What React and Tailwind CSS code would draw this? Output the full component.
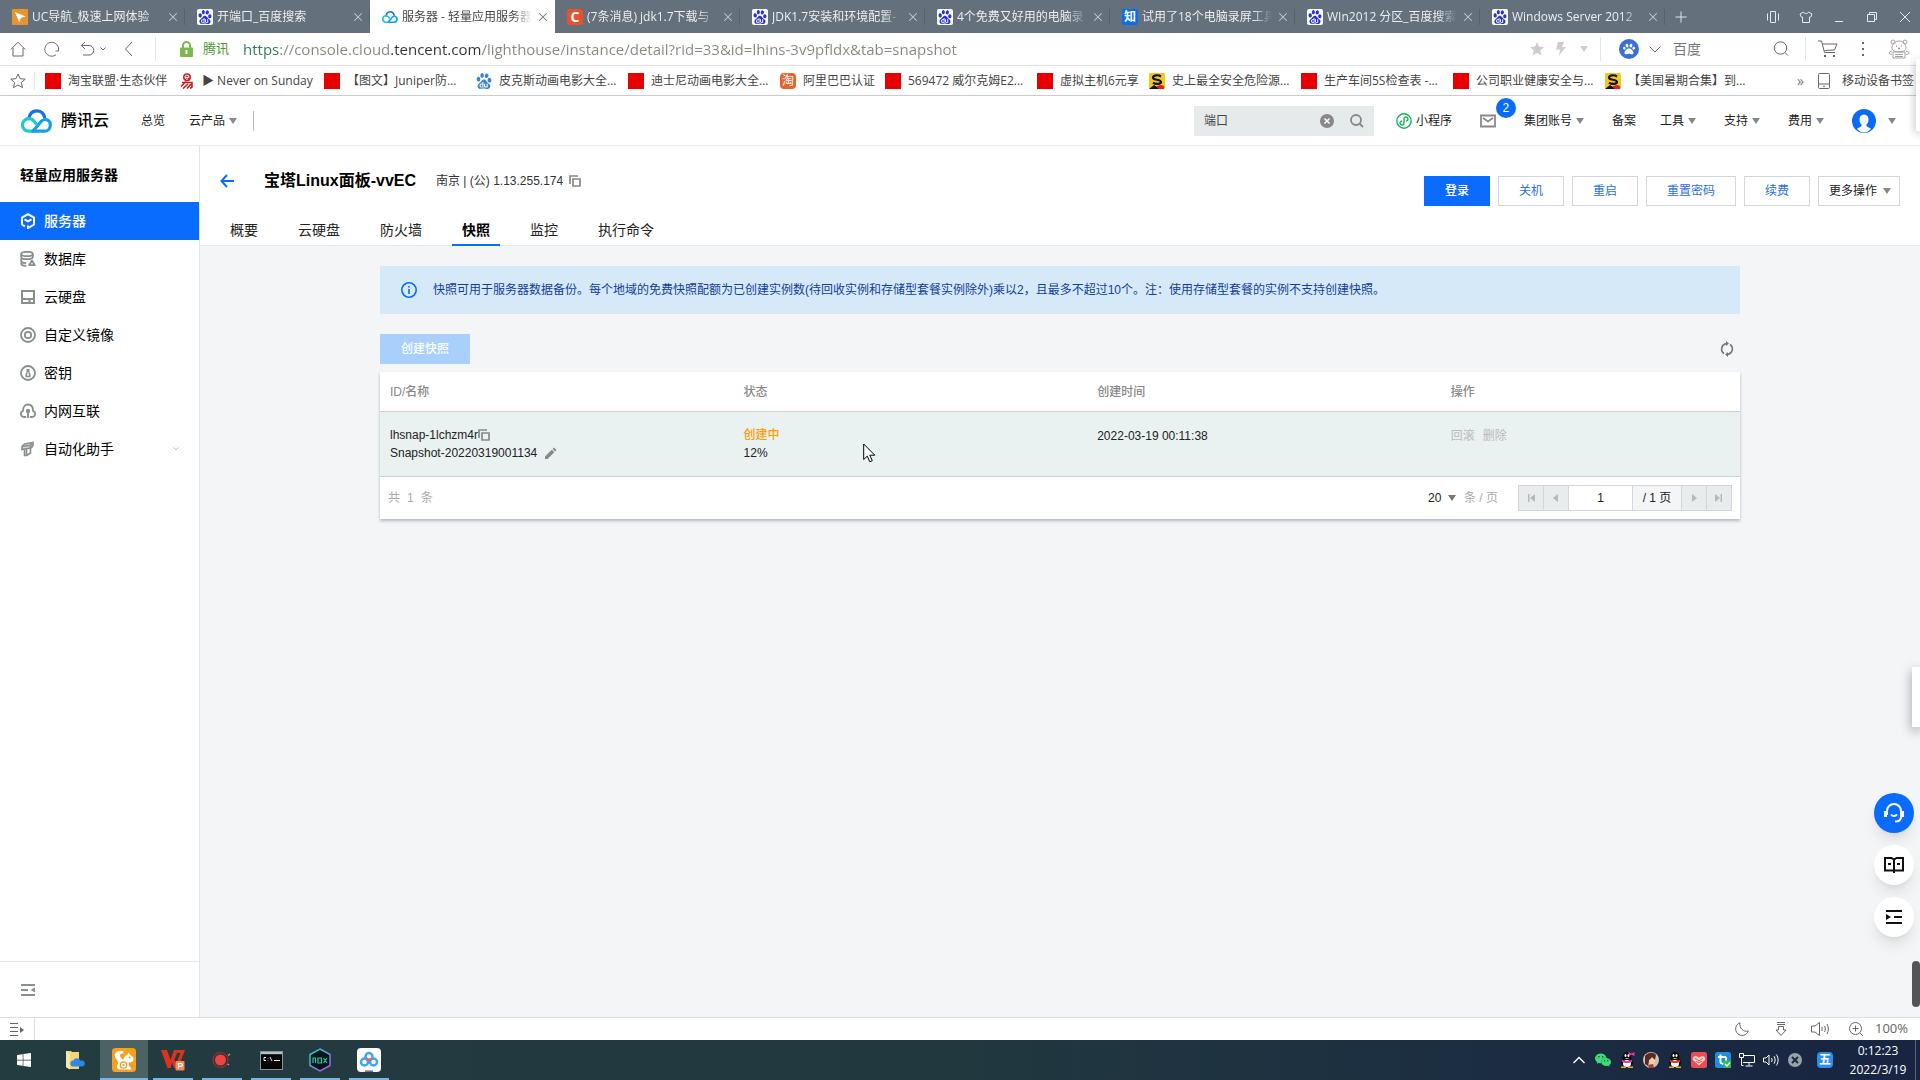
import React, { useState } from 'react';
import { SiBaidu, SiWechat } from 'react-icons/si';
import { FaPaw, FaWindows } from 'react-icons/fa';
import { X, Plus } from 'lucide-react';

const tabs = [
  { title: 'UC导航_极速上网体验', icon: 'uc' },
  { title: '开端口_百度搜索', icon: 'baidu' },
  { title: '服务器 - 轻量应用服务器', icon: 'tencent', active: true },
  { title: '(7条消息) jdk1.7下载与', icon: 'csdn' },
  { title: 'JDK1.7安装和环境配置-', icon: 'baidu' },
  { title: '4个免费又好用的电脑录', icon: 'baidu' },
  { title: '试用了18个电脑录屏工具', icon: 'zhihu' },
  { title: 'WIn2012 分区_百度搜索', icon: 'baidu' },
  { title: 'Windows Server 2012', icon: 'baidu' },
];

const bookmarks = [
  { title: '淘宝联盟·生态伙伴', icon: 'red', width: 'w-[134px]' },
  { title: '▶ Never on Sunday', icon: 'yi', width: 'w-[145px]' },
  { title: '【图文】Juniper防...', icon: 'red', width: 'w-[152px]' },
  { title: '皮克斯动画电影大全...', icon: 'paw', width: 'w-[152px]' },
  { title: '迪士尼动画电影大全...', icon: 'red', width: 'w-[152px]' },
  { title: '阿里巴巴认证', icon: 'tao', width: 'w-[105px]' },
  { title: '569472 威尔克姆E2...', icon: 'red', width: 'w-[152px]' },
  { title: '虚拟主机6元享', icon: 'red', width: 'w-[112px]' },
  { title: '史上最全安全危险源...', icon: 'sou', width: 'w-[152px]' },
  { title: '生产车间5S检查表 -...', icon: 'red', width: 'w-[152px]' },
  { title: '公司职业健康安全与...', icon: 'red', width: 'w-[152px]' },
  { title: '【美国暑期合集】到...', icon: 'sou', width: 'w-[152px]' },
];

const menu = [
  { name: '服务器', icon: 'server', active: true },
  { name: '数据库', icon: 'database' },
  { name: '云硬盘', icon: 'disk' },
  { name: '自定义镜像', icon: 'image' },
  { name: '密钥', icon: 'key' },
  { name: '内网互联', icon: 'network' },
  { name: '自动化助手', icon: 'assistant', children: true },
];

const detailTabs = ['概要', '云硬盘', '防火墙', '快照', '监控', '执行命令'];

const Caret = ({ className = 'text-[#888]' }) => (
  <svg width="8" height="6" viewBox="0 0 8 6" className={`shrink-0 ${className}`} fill="currentColor">
    <path d="M0 0h8L4 6z" />
  </svg>
);

const TencentLogo = ({ className }) => (
  <svg viewBox="0 0 34 26" className={className} fill="none" strokeWidth="3.4" strokeLinecap="round">
    <path d="M8.5 10.5C9.5 5 13 2 17.3 2c4.600 0 7.500 3 8.500 7" stroke="#1a6fe8" />
    <path d="M16 15.500C14 12 11.500 10.500 8.500 10.500A6.700 6.700 0 0 0 8.500 24H14" stroke="#1fc8d8" />
    <path d="M13 24 22 13.500C25.500 9.500 32 11.500 32 17.200 32 21 29.500 24 25.500 24H13" stroke="#12a0ea" strokeLinejoin="round" />
  </svg>
);

const Favicon = ({ type }) => {
  switch (type) {
    case 'uc':
      return (
        <svg viewBox="0 0 16 16" className="w-4 h-4 shrink-0">
          <rect width="16" height="16" rx="1" fill="#e8942e" />
          <path d="M3 3l10.500 4.500L8.800 9 7.200 13.500z" fill="#fff" />
        </svg>
      );
    case 'baidu':
      return (
        <span className="w-4 h-4 shrink-0 rounded-xs bg-white flex items-center justify-center">
          <SiBaidu className="w-3.5 h-3.5 text-[#2932d0]" />
        </span>
      );
    case 'tencent':
      return <TencentLogo className="w-4 h-4 shrink-0" />;
    case 'csdn':
      return <span className="w-4 h-4 shrink-0 rounded-xs bg-[#e8502f] text-white text-sm leading-4 font-bold text-center">C</span>;
    case 'zhihu':
      return <span className="w-4 h-4 shrink-0 rounded-xs bg-[#0a6cf0] text-white text-xs leading-4 font-bold text-center">知</span>;
    case 'paw':
      return <SiBaidu className="w-4 h-4 shrink-0 text-[#3a82dc]" />;
    case 'tao':
      return <span className="w-4 h-4 shrink-0 rounded-sm bg-[#e8632c] text-white text-xs leading-4 text-center">淘</span>;
    case 'yi':
      return (
        <svg viewBox="0 0 16 16" className="w-4 h-4 shrink-0" fill="none" stroke="#c81e1e" strokeWidth="1.600">
          <circle cx="8" cy="4.200" r="4" fill="#c81e1e" stroke="none" />
          <path d="M6 4.400h4a2 2 0 1 0-.8 1.400" stroke="#fff" strokeWidth="1" />
          <path d="M3 9.500h10v4.500l-2 1.500M7 8.500l-5 5M9 11l-5 4.500M12 11l-4 4.500" />
        </svg>
      );
    case 'sou':
      return (
        <svg viewBox="0 0 16 16" className="w-4 h-4 shrink-0">
          <rect width="16" height="16" rx="1" fill="#f2c81e" />
          <path d="M12 3.500C9 1.500 4 2 4 4.800 4 7.500 12 6 12 9c0 2.300-5 2.500-8 .8" fill="none" stroke="#111" strokeWidth="2.200" />
          <path d="M0 16l5-4 6 4z" fill="#111" />
          <path d="M8 13l4-1 3 1v3H9z" fill="#e02020" />
        </svg>
      );
    default:
      return <span className="w-4 h-4 shrink-0 bg-[#e60000]" />;
  }
};

const MenuIcon = ({ type }) => {
  const common = { viewBox: '0 0 16 16', className: 'w-4 h-4 shrink-0', fill: 'none', stroke: 'currentColor', strokeWidth: 1.8 };
  switch (type) {
    case 'server':
      return (
        <svg {...common} strokeWidth="2">
          <path d="M5 13.300 2 11.500v-7L8 1.200l6 3.300v7L8 15v-2.500" />
          <path d="M4.500 6.300 8 8.300l3.500-2" />
        </svg>
      );
    case 'database':
      return (
        <svg {...common}>
          <ellipse cx="7" cy="3" rx="5.800" ry="2.200" />
          <path d="M1.200 3v3c0 1.300 2.600 2.200 5.800 2.200S12.800 7.300 12.800 6V3M1.200 7.500V10c0 1 1.800 2 5 2M1.200 11.500v1.300c0 1 2 2 5 2" />
          <path d="M12 9.500l2.800 4.700H9.200z" strokeLinejoin="round" />
        </svg>
      );
    case 'disk':
      return (
        <svg {...common} strokeWidth="2">
          <path d="M2 2h12v12H2zM2 10h12M9.500 10v4" />
        </svg>
      );
    case 'image':
      return (
        <svg {...common}>
          <circle cx="8" cy="8" r="7" />
          <circle cx="8" cy="8" r="3.200" />
        </svg>
      );
    case 'key':
      return (
        <svg {...common}>
          <circle cx="8" cy="8" r="7" />
          <path d="M8 4v3.500" strokeWidth="3" />
          <path d="M5.500 11.500h5M6.800 7.500l-.8 4M9.200 7.500l.8 4" strokeWidth="1.600" />
        </svg>
      );
    case 'network':
      return (
        <svg {...common}>
          <path d="M6 14H4.200A3.200 3.200 0 0 1 3 7.800C3 4 5 1.500 8 1.500S13 4 13 7.800A3.200 3.200 0 0 1 11.800 14H10" />
          <circle cx="8" cy="8" r="1.300" />
          <path d="M8 8v7" strokeWidth="2" />
        </svg>
      );
    default:
      return (
        <svg {...common} strokeWidth="1.600">
          <path d="M2 5.500 4.500 3 13 1.500v3L10.500 7 2 8.500z" fill="currentColor" fillOpacity=".35" />
          <path d="M4.500 8.500v6h2V8.200M6.500 14.500l4-2.500V7l2-1.500M2 5.500l8.500-1.300L13 1.500M10.500 4.200V7" />
        </svg>
      );
  }
};

const CopyIcon = () => (
  <svg viewBox="0 0 12 12" className="w-3 h-3 shrink-0 text-[#888]" fill="none" stroke="currentColor" strokeWidth="1.700">
    <path d="M4 4h7v7H4zM1 9V1h8" />
  </svg>
);

const BrowserTabs = () => (
  <div className="h-[33px] flex bg-[#64707c] text-[#eceff2] text-xs">
    {tabs.map((tab, i) => (
      <div
        key={i}
        className={`w-[185px] shrink-0 flex items-center pl-3 pr-2 gap-1 ${tab.active ? 'bg-white text-[#444]' : ''}`}
      >
        <Favicon type={tab.icon} />
        <span className="flex-1 min-w-0 overflow-hidden whitespace-nowrap [mask-image:linear-gradient(to_right,black_85%,transparent)]">
          {tab.title}
        </span>
        <button aria-label="关闭标签" className={`shrink-0 ${tab.active ? 'text-[#777]' : 'text-[#c3c9cf]'}`}>
          <X className="w-3.5 h-3.5" strokeWidth={1.8} />
        </button>
        <span className={`w-px h-4 -mr-2 ${tab.active ? '' : 'bg-[#56616c]'}`} />
      </div>
    ))}
    <button aria-label="新标签" className="w-8 flex items-center justify-center">
      <Plus className="w-4.5 h-4.5" strokeWidth={1.2} />
    </button>
    <div className="flex-1 flex items-center justify-end gap-[19px] pr-2 text-[#e8ebee]">
      <button aria-label="分屏">
        <svg viewBox="0 0 14 14" className="w-3.5 h-3.5" fill="none" stroke="currentColor">
          <path d="M4.500 1.500h5v11h-5zM1.500 3.500v7M12.500 3.500v7" />
        </svg>
      </button>
      <button aria-label="皮肤">
        <svg viewBox="0 0 14 14" className="w-3.5 h-3.5" fill="none" stroke="currentColor">
          <path d="M4.500 2 1 4l1.200 3H3.500v5.500h7V7h1.300L13 4 9.500 2C9 4 5 4 4.500 2z" />
        </svg>
      </button>
      <button aria-label="最小化">
        <svg viewBox="0 0 14 14" className="w-3.5 h-3.5" stroke="currentColor">
          <path d="M3 11.500h8" />
        </svg>
      </button>
      <button aria-label="还原">
        <svg viewBox="0 0 14 14" className="w-3.5 h-3.5" fill="none" stroke="currentColor">
          <path d="M2.500 4.500h7v7h-7zM4.500 4.500v-2h7v7h-2" />
        </svg>
      </button>
      <button aria-label="关闭窗口">
        <svg viewBox="0 0 14 14" className="w-3.5 h-3.5" stroke="currentColor">
          <path d="M2 2l10 10M12 2 2 12" />
        </svg>
      </button>
    </div>
  </div>
);

const AddressBar = () => (
  <div className="h-[33px] flex items-center bg-white border-b border-[#e2e4e4] text-[#666]">
    <div className="flex items-center pl-2.5">
      <button aria-label="主页">
        <svg viewBox="0 0 16 16" className="w-4 h-4" fill="none" stroke="currentColor">
          <path d="M.8 8.500 8 1.200l7.200 7.300M3 7v8h10V7" />
        </svg>
      </button>
      <button aria-label="刷新" className="ml-4.5">
        <svg viewBox="0 0 16 16" className="w-4 h-4" fill="none" stroke="currentColor">
          <path d="M12 13.800A7 7 0 1 1 14.500 10M14.500 6v4h-3" strokeOpacity=".9" />
        </svg>
      </button>
      <button aria-label="撤销" className="ml-5 flex items-center gap-1">
        <svg viewBox="0 0 16 16" className="w-4 h-4" fill="none" stroke="currentColor">
          <path d="M5 1 1.500 4.500 5 8M1.500 4.500H9a4.700 4.700 0 0 1 0 9.500H3" />
        </svg>
        <svg viewBox="0 0 6 4" className="w-1.5 h-1" fill="none" stroke="currentColor">
          <path d="M.5.5 3 3 5.500.5" />
        </svg>
      </button>
      <button aria-label="后退" className="ml-4.5">
        <svg viewBox="0 0 9 16" className="w-[9px] h-4" fill="none" stroke="currentColor">
          <path d="M8 1 1.500 8 8 15" />
        </svg>
      </button>
    </div>
    <div className="w-px h-6 bg-[#e3e5e5] ml-5.5" />
    <svg viewBox="0 0 13 16" className="w-[13px] h-4 ml-6" fill="none">
      <path d="M3 7V4.500a3.500 3.500 0 0 1 7 0V7" stroke="#7cb84e" strokeWidth="2" />
      <rect y="6.500" width="13" height="9.500" rx="1" fill="#7cb84e" />
      <path d="M6.500 9v4" stroke="#fff" strokeWidth="2" />
    </svg>
    <span className="ml-2.5 text-[13px] text-[#4c9a30]">腾讯</span>
    <input
      aria-label="地址"
      defaultValue="https://console.cloud.tencent.com/lighthouse/instance/detail?rid=33&id=lhins-3v9pfldx&tab=snapshot"
      className="flex-1 min-w-0 ml-3.5 text-[15px] outline-none text-transparent bg-clip-text bg-[linear-gradient(to_right,#2f7d4a_0_37px,#85897f_37px_146px,#333_146px_239px,#85897f_239px)]"
    />
    <div className="flex items-center text-[#ccc]">
      <svg viewBox="0 0 16 16" className="w-3.5 h-3.5" fill="currentColor">
        <path d="M8 0l2.300 5.300 5.700.5-4.300 3.800L13 15.500 8 12.400 3 15.500l1.300-5.900L0 5.800l5.700-.5z" />
      </svg>
      <svg viewBox="0 0 10 14" className="w-2.5 h-3.5 ml-3" fill="currentColor">
        <path d="M2 0h6L6 5h4L2.500 14 4.500 7.500H0z" />
      </svg>
      <Caret className="ml-3.5 text-[#ccc]" />
    </div>
    <div className="w-px h-6 bg-[#e3e5e5] ml-3" />
    <div className="flex items-center w-51 pl-4.5">
      <span className="w-5 h-5 shrink-0 rounded-full bg-[#3a6fd8] flex items-center justify-center">
        <FaPaw className="w-3 h-3 text-white" />
      </span>
      <svg viewBox="0 0 12 7" className="w-3 h-[7px] ml-2.5 shrink-0" fill="none" stroke="currentColor">
        <path d="M.5.5 6 6 11.500.5" />
      </svg>
      <input aria-label="搜索引擎" placeholder="百度" className="flex-1 min-w-0 ml-3 text-sm outline-none placeholder:text-[#777]" />
      <button aria-label="搜索">
        <svg viewBox="0 0 16 16" className="w-4 h-4 mr-4" fill="none" stroke="currentColor">
          <circle cx="7.500" cy="7" r="6.200" />
          <path d="M12 11.500l3 3" />
        </svg>
      </button>
    </div>
    <div className="w-px h-6 bg-[#e3e5e5]" />
    <button aria-label="购物" className="ml-3">
      <svg viewBox="0 0 20 18" className="w-5 h-4.5" fill="none" stroke="currentColor">
        <path d="M0 1h3.500l3 11.500H17M4.500 4H19l-2.500 6-10 .5" />
        <path d="M6 16h2M15 16h2" strokeWidth="2" />
      </svg>
    </button>
    <button aria-label="菜单" className="ml-6">
      <svg viewBox="0 0 2 14" className="w-0.5 h-3.5" fill="currentColor">
        <path d="M0 0h2v2H0zM0 6h2v2H0zM0 12h2v2H0z" />
      </svg>
    </button>
    <button aria-label="账号" className="ml-6 mr-2.5">
      <svg viewBox="0 0 22 20" className="w-5.5 h-5" fill="none" stroke="#999" strokeWidth=".9">
        <circle cx="5" cy="3" r="2" />
        <circle cx="17" cy="3" r="2" />
        <path d="M4 9c0-4 3-7 7-7s7 3 7 7c0 2.500-3 4-7 4s-7-1.500-7-4zM4 12c-1 0-3 1-3 2s2 2 3 1M18 12c1 0 3 1 3 2s-2 2-3 1M5 13h12v6H5zM7 15.500h8M7 17.500h8" />
        <path d="M8 7h.8M13.200 7h.8M10 9.500h2" strokeWidth="1.500" />
      </svg>
    </button>
  </div>
);

const BookmarkBar = () => (
  <div className="h-[30px] flex items-center bg-white border-b border-[#c9cccc] text-[#444] text-xs">
    <button aria-label="收藏" className="pl-2.5">
      <svg viewBox="0 0 16 16" className="w-4 h-4" fill="none" stroke="#666">
        <path d="M8 1l2.100 4.700 5.100.5-3.900 3.400 1.200 5L8 12l-4.500 2.600 1.200-5L.8 6.200l5.100-.5z" />
      </svg>
    </button>
    <div className="w-px h-4.5 ml-2 mr-2.5 bg-[#e3e5e5]" />
    {bookmarks.map((item) => (
      <a key={item.title} href="#" className={`${item.width} shrink-0 flex items-center gap-[7px] whitespace-nowrap`}>
        <Favicon type={item.icon} />
        {item.title}
      </a>
    ))}
    <div className="flex-1 flex items-center justify-end pr-1.5">
      <span className="text-[#777] text-sm">»</span>
      <svg viewBox="0 0 12 16" className="w-3 h-4 ml-3.5" fill="none" stroke="#666">
        <rect x=".5" y=".5" width="11" height="15" rx="1" />
        <path d="M.5 11h11M5 13.300h2" />
      </svg>
      <a href="#" className="ml-3">移动设备书签</a>
    </div>
  </div>
);

const ConsoleHeader = () => (
  <header className="h-[50px] flex items-center bg-white border-b border-[#e8eaea] text-xs text-[#222]">
    <TencentLogo className="w-[33px] h-6 ml-5" />
    <span className="ml-2 text-base font-medium text-black">腾讯云</span>
    <a href="#" className="ml-8">总览</a>
    <button className="ml-6 flex items-center gap-1">云产品<Caret /></button>
    <div className="w-px h-5 ml-4 bg-[#bbb]" />
    <div className="flex-1" />
    <label className="w-45 h-[30px] flex items-center bg-[#e7eaea] px-2.5">
      <input aria-label="搜索产品" defaultValue="端口" className="flex-1 min-w-0 outline-none text-[#444]" />
      <svg viewBox="0 0 14 14" className="w-3.5 h-3.5" stroke="#fff" strokeWidth="1.600">
        <circle cx="7" cy="7" r="7" fill="#888" stroke="none" />
        <path d="M4.500 4.500l5 5M9.500 4.500l-5 5" />
      </svg>
      <svg viewBox="0 0 14 14" className="w-3.5 h-3.5 ml-4" fill="none" stroke="#888" strokeWidth="1.800">
        <circle cx="6" cy="6" r="5" />
        <path d="M9.500 9.500 13 13" />
      </svg>
    </label>
    <div className="flex items-center gap-7 pl-5.5 pr-6">
      <a href="#" className="flex items-center gap-1">
        <svg viewBox="0 0 16 16" className="w-4 h-4" fill="none" stroke="#18b45a" strokeWidth="1.400">
          <circle cx="8" cy="8" r="7.200" />
          <path d="M9.800 8a2 2 0 1 0-1.800-2v4a2 2 0 1 1-1.800-2" />
        </svg>
        小程序
      </a>
      <button aria-label="消息" className="relative">
        <svg viewBox="0 0 16 14" className="w-4 h-3.5" fill="none" stroke="#888" strokeWidth="1.800">
          <path d="M1 1.500h14v11H1zM3 4l5 3.500L13 4" />
        </svg>
        <span className="absolute -top-4 left-4 w-5 h-5 rounded-full bg-[#0a6cf5] text-white text-xs leading-5 text-center">2</span>
      </button>
      <button className="flex items-center gap-1">集团账号<Caret /></button>
      <div className="flex items-center gap-6">
        <a href="#">备案</a>
        <button className="flex items-center gap-1">工具<Caret /></button>
      </div>
      <button className="flex items-center gap-1">支持<Caret /></button>
      <button className="flex items-center gap-1">费用<Caret /></button>
      <button aria-label="用户" className="flex items-center gap-3">
        <svg viewBox="0 0 24 24" className="w-6 h-6">
          <circle cx="12" cy="12" r="12" fill="#0a6cf5" />
          <path d="M12 5.500c-3 0-4.500 2.200-4.500 5 0 2.200.8 4 2.200 5.200 0 2.300-3 2.800-4.700 3.800 3.500 5.300 10.500 5.300 14 0-1.700-1-4.700-1.500-4.700-3.800 1.400-1.200 2.200-3 2.200-5.200 0-2.800-1.500-5-4.500-5z" fill="#fff" />
        </svg>
        <Caret />
      </button>
    </div>
  </header>
);

const Sidebar = () => (
  <aside className="w-50 shrink-0 flex flex-col bg-white border-r border-[#e2e5e8]">
    <h2 className="h-14 flex items-center pl-5 pt-0.5 text-sm font-bold text-black">轻量应用服务器</h2>
    <nav className="flex-1">
      {menu.map((item) => (
        <a
          key={item.name}
          href="#"
          className={`h-[38px] flex items-center gap-2 px-5 text-sm ${
            item.active ? 'bg-[#0a6cff] text-white font-medium' : 'text-black'
          }`}
        >
          <span className={item.active ? 'text-white' : 'text-[#888f8f]'}>
            <MenuIcon type={item.icon} />
          </span>
          <span className="flex-1">{item.name}</span>
          {item.children && (
            <svg viewBox="0 0 6 4" className="w-1.5 h-1" fill="none" stroke="#bbb">
              <path d="M.5.5 3 3 5.500.5" />
            </svg>
          )}
        </a>
      ))}
    </nav>
    <div className="h-14 flex items-center pl-5 border-t border-[#e5e8e8]">
      <button aria-label="收起菜单">
        <svg viewBox="0 0 16 14" className="w-4 h-3.5 text-[#888f8f]" fill="none" stroke="currentColor" strokeWidth="2">
          <path d="M1 2h14M1 7h7M1 12h14" />
          <path d="M15 4.500v5L10.500 7z" fill="currentColor" stroke="none" />
        </svg>
      </button>
    </div>
  </aside>
);

const ActionButton = ({ children }) => (
  <button className="h-[30px] px-5 border border-[#d3d6da] bg-white text-[#2e6fdc]">{children}</button>
);

const InstanceHeader = () => {
  const [active, setActive] = useState('快照');

  return (
    <div className="flex justify-between items-start bg-white border-b border-[#e5e8ea] pl-5 pr-5 text-xs">
      <div>
        <div className="h-[70px] flex items-center">
          <button aria-label="返回">
            <svg viewBox="0 0 14 14" className="w-3.5 h-3.5" fill="none" stroke="#0a6cff" strokeWidth="2">
              <path d="M7 1 1.500 7 7 13M1.500 7H14" />
            </svg>
          </button>
          <h1 className="ml-7.5 text-base font-bold text-black">宝塔Linux面板-vvEC</h1>
          <span className="ml-5 mr-1.5 text-[#333]">南京 | (公) 1.13.255.174</span>
          <CopyIcon />
        </div>
        <div className="h-[30px] flex gap-5 text-sm -mb-px">
          {detailTabs.map((tab) => (
            <button
              key={tab}
              onClick={() => setActive(tab)}
              className={`px-2.5 border-b-2 ${tab === active ? 'border-[#0a6cff] font-bold text-black' : 'border-transparent text-[#222]'}`}
            >
              {tab}
            </button>
          ))}
        </div>
      </div>
      <div className="flex gap-2 mt-[30px]">
        <button className="h-[30px] px-[21px] bg-[#0a6cff] text-white font-medium">登录</button>
        <ActionButton>关机</ActionButton>
        <ActionButton>重启</ActionButton>
        <ActionButton>重置密码</ActionButton>
        <ActionButton>续费</ActionButton>
        <button className="h-[30px] px-2 flex items-center gap-1.5 border border-[#d3d6da] bg-white text-[#222]">
          <span className="pl-0.5">更多操作</span>
          <Caret />
        </button>
      </div>
    </div>
  );
};

const pagerButton = 'w-[25px] flex items-center justify-center bg-[#e9ecec] border-r border-[#d3d6da]';

const SnapshotTable = () => (
  <div className="mt-2 bg-white shadow-[0_2px_3px_rgba(54,58,80,0.320)] text-[#222]">
    <table className="w-full table-fixed text-left">
      <thead>
        <tr className="h-[39px] border-b border-[#cdd2d2] text-[#888]">
          <th className="w-[26%] px-2.5 pt-0.5 font-medium">ID/名称</th>
          <th className="w-[26%] px-2.5 pt-0.5 font-medium">状态</th>
          <th className="w-[26%] px-2.5 pt-0.5 font-medium">创建时间</th>
          <th className="w-[22%] px-2.5 pt-0.5 font-medium">操作</th>
        </tr>
      </thead>
      <tbody>
        <tr className="h-[65px] bg-[#e9f1f1] border-b border-[#cdd2d2] align-top leading-[18px]">
          <td className="px-2.5 pt-3.5">
            <div className="flex items-center">lhsnap-1lchzm4r<CopyIcon /></div>
            <div className="flex items-center gap-2">
              Snapshot-20220319001134
              <button aria-label="修改名称">
                <svg viewBox="0 0 12 12" className="w-3 h-3" fill="#888">
                  <path d="M0 9.500V12h2.500l6.800-6.800-2.500-2.500zM11.500 3 9 .5 7.600 1.900l2.500 2.500z" />
                </svg>
              </button>
            </div>
          </td>
          <td className="px-2.5 pt-3.5">
            <div className="text-[#ff9d00] font-medium">创建中</div>
            <div>12%</div>
          </td>
          <td className="px-2.5 pt-[15px]">2022-03-19 00:11:38</td>
          <td className="px-2.5 pt-[15px]">
            <div className="flex gap-2 text-[#bbb]">
              <button disabled>回滚</button>
              <button disabled>删除</button>
            </div>
          </td>
        </tr>
      </tbody>
    </table>
    <div className="h-[42px] flex items-center px-2 text-[#aaa]">
      <span className="flex-1 flex gap-[7px]"><span>共</span><span>1</span><span>条</span></span>
      <label className="flex items-center">
        <select aria-label="每页条数" defaultValue="20" className="appearance-none text-[#222] outline-none">
          <option>20</option>
        </select>
        <Caret className="ml-1.5 mr-2 text-[#777]" />
        条 / 页
      </label>
      <div className="h-[26px] ml-5 flex border border-r-0 border-[#d3d6da] text-[#222]">
        <button aria-label="首页" className={pagerButton}>
          <svg viewBox="0 0 8 8" className="w-2 h-2" fill="#b5b9b9"><path d="M1 0h1.500v8H1zM8 0v8L3 4z" /></svg>
        </button>
        <button aria-label="上一页" className={pagerButton}>
          <svg viewBox="0 0 8 8" className="w-2 h-2" fill="#b5b9b9"><path d="M6 0v8L1 4z" /></svg>
        </button>
        <input aria-label="页码" defaultValue="1" className="w-16 text-center bg-white border-r border-[#d3d6da] outline-none" />
        <span className="w-[49px] text-center leading-6 bg-[#f3f5f7] border-r border-[#d3d6da]">/ 1 页</span>
        <button aria-label="下一页" className={pagerButton}>
          <svg viewBox="0 0 8 8" className="w-2 h-2" fill="#b5b9b9"><path d="M2 0v8l5-4z" /></svg>
        </button>
        <button aria-label="末页" className={pagerButton}>
          <svg viewBox="0 0 8 8" className="w-2 h-2" fill="#b5b9b9"><path d="M5.500 0H7v8H5.500zM0 0v8l5-4z" /></svg>
        </button>
      </div>
    </div>
  </div>
);

const FloatingTools = () => (
  <div className="absolute right-1.5 bottom-20 flex flex-col gap-3">
    <button aria-label="客服" className="w-10 h-10 rounded-full bg-[#0a6cff] shadow-lg flex items-center justify-center">
      <svg viewBox="0 0 20 20" className="w-5 h-5" fill="none" stroke="#fff" strokeWidth="2">
        <path d="M3 12V8a7 7 0 0 1 14 0v6c0 3-2 4.500-6 4.500" />
        <path d="M1.500 8v6M18.500 8v6" strokeWidth="3" />
        <path d="M7 11.500c1.500 2 4.500 2 6 0" />
      </svg>
    </button>
    <button aria-label="文档" className="w-10 h-10 rounded-full bg-white shadow-lg flex items-center justify-center">
      <svg viewBox="0 0 20 16" className="w-5 h-4" fill="none" stroke="#111" strokeWidth="2">
        <path d="M10 2.500V16M10 13.500H1V1h6.500L10 2.500 12.500 1H19v12.500h-9M4 7h3M13 7h3" />
      </svg>
    </button>
    <button aria-label="展开" className="w-10 h-10 rounded-full bg-white shadow-lg flex items-center justify-center">
      <svg viewBox="0 0 16 14" className="w-4 h-3.5" fill="none" stroke="#111" strokeWidth="2">
        <path d="M0 1h16M8 7h8M0 13h16" />
        <path d="M0 4v6l5-3z" fill="#111" stroke="none" />
      </svg>
    </button>
  </div>
);

const StatusBar = () => (
  <div className="h-[23px] flex items-center justify-between bg-white border-t border-[#dde0e0] text-[#666]">
    <button aria-label="侧栏" className="h-full pl-2.5 pr-2.5 border-r border-[#dde0e0]">
      <svg viewBox="0 0 14 14" className="w-3.5 h-3.5" fill="none" stroke="currentColor">
        <path d="M0 1.500h8M0 5.500h8M0 9.500h8M0 13.500h8" />
        <path d="M10 5v6l4-3z" fill="currentColor" stroke="none" />
      </svg>
    </button>
    <div className="flex items-center pr-3">
      <svg viewBox="0 0 14 14" className="w-3.5 h-3.5" fill="none" stroke="currentColor">
        <path d="M5 .8A6.500 6.500 0 1 0 13.300 9C8.500 10.500 4 6 5 .8z" />
      </svg>
      <svg viewBox="0 0 12 14" className="w-3 h-3.5 ml-6.5" fill="none" stroke="currentColor">
        <path d="M2 .5h8M2 2.500h8M3.500 4.500h5V8H11l-5 5.500L1 8h2.500z" />
      </svg>
      <svg viewBox="0 0 18 14" className="w-4.5 h-3.5 ml-6" fill="none" stroke="currentColor">
        <path d="M.5 4v6H4l4.500 3.500V.5L4 4zM11 5v4M13.500 4c1 1.500 1 4.500 0 6M16 2c1.800 3 1.800 7 0 10" />
      </svg>
      <svg viewBox="0 0 14 14" className="w-3.5 h-3.5 ml-5 mr-3" fill="none" stroke="currentColor">
        <circle cx="6.500" cy="6.500" r="6" />
        <path d="M11 11l3 3M3.500 6.500h6M6.500 3.500v6" />
      </svg>
      <span className="text-[13px]">100%</span>
    </div>
  </div>
);

const Penguin = ({ color, bow }) => (
  <svg viewBox="0 0 16 16" className="w-4 h-4">
    <ellipse cx="8" cy="10" rx="6.200" ry="5" fill="#0c0c10" />
    <ellipse cx="8" cy="5" rx="4.500" ry="5" fill="#0c0c10" />
    <ellipse cx="8" cy="11.500" rx="4" ry="3.600" fill="#fff" />
    <path d="M3 7.500c3 2 7 2 10 0l.4 2c-3 2-7.800 2-10.800 0z" fill={color} />
    <ellipse cx="6.500" cy="3.500" rx="1" ry="1.500" fill="#fff" />
    <ellipse cx="9.500" cy="3.500" rx="1" ry="1.500" fill="#fff" />
    <path d="M5.500 6h5L8 7.200zM2 14.500h5V16H2zM9 14.500h5V16H9z" fill="#f5a623" />
    {bow && <path d="M9.500 0l3 1.500L15.500 0v4l-3-1.200-2.500 1z" fill="#f032a0" />}
  </svg>
);

const TaskIcon = ({ type }) => {
  switch (type) {
    case 'start':
      return <FaWindows className="w-4 h-4 text-white" />;
    case 'explorer':
      return (
        <svg viewBox="0 0 20 20" className="w-5 h-5">
          <path d="M1 1h5l1 1h7v17H4l-3-2z" fill="#f3d578" />
          <path d="M1 1l4 3v15.500L1 17z" fill="#fbe9a8" />
          <path d="M8 16.500a3 3 0 0 1 .5-6c1-3 5.500-3 6.500 0h1.500a3 3 0 0 1 .5 6z" fill="#2b88e6" />
        </svg>
      );
    case 'uc':
      return (
        <svg viewBox="0 0 24 24" className="w-6 h-6">
          <rect width="24" height="24" rx="3.500" fill="#f7a01c" />
          <path
            d="M11.500 3.500C7 1.500 2.500 4 2.800 8c.2 3 3.500 4.200 3.200 7-.2 1.800-1 2.500-1 4 0 1.500 1 2.500 3 2.500h11.500c-.2-2-1.300-3-3-3.500.7-1 .7-2.200.2-3.500 2.300.2 4.800-.6 4.800-3 0-2-1.300-3.800-3.500-4.600L17 4.500l-1.700 2.300c-2.300.8-3.300 2.700-4.300 5.200-.8-1.500-3-2.500-3-4.500 0-1.600 1.500-2.600 3.500-1.700z"
            fill="#fff"
          />
          <circle cx="11.500" cy="17" r="3.200" fill="none" stroke="#f5981c" strokeWidth="1.300" />
          <circle cx="11.500" cy="17" r="1" fill="#f5981c" />
          <circle cx="17.500" cy="9.500" r=".9" fill="#f5981c" />
        </svg>
      );
    case 'wps':
      return (
        <svg viewBox="0 0 24 22" className="w-6 h-5.5">
          <path d="M0 1h6l3.500 10L13 1h11l-7 18h-4L11 13.500 9.500 19H6.500z" fill="#e0311f" />
          <path d="M16 4h3.500L15 15l-1.500-4.500z" fill="#233b40" />
          <rect x="14.500" y="12" width="9" height="9.500" rx="1" fill="#f08a5c" />
          <path d="M17.500 19.500v-5H20a1.300 1.300 0 0 1 0 2.800h-2.500" fill="none" stroke="#fff" strokeWidth="1.200" />
        </svg>
      );
    case 'record':
      return (
        <svg viewBox="0 0 20 18" className="w-5 h-4.5">
          <circle cx="8.500" cy="9" r="7.500" fill="none" stroke="#a32a2c" strokeWidth="1.200" />
          <circle cx="8.500" cy="9" r="5.500" fill="#f04444" />
          <path d="M16 4.500l2-1.500M15.500 13l1.500 1" stroke="#d88" strokeWidth="1.500" />
        </svg>
      );
    case 'cmd':
      return (
        <svg viewBox="0 0 23 19" className="w-[23px] h-[19px]">
          <rect x=".5" y=".5" width="22" height="18" fill="#050505" stroke="#8a9496" />
          <path d="M1 1h21v2.200H1z" fill="#b8c0c2" />
          <path d="M6 6.500H4v3h2M8 7v.5M8 9v.5M10 6l2 4M14 9.500h6" stroke="#eee" fill="none" />
        </svg>
      );
    case 'nox':
      return (
        <svg viewBox="0 0 24 24" className="w-6 h-6" fill="none">
          <defs>
            <linearGradient id="nox" x1="0" y1="0" x2="1" y2="1">
              <stop offset="0" stopColor="#22d3c8" />
              <stop offset="1" stopColor="#c04be8" />
            </linearGradient>
          </defs>
          <path d="M12 1l10 5.500v11L12 23 2 17.500v-11z" fill="#0b1418" stroke="url(#nox)" strokeWidth="1.500" />
          <path d="M5 15v-5h2.500v5M10 10h3.500v5H10zM15.500 10l3.500 5M19 10l-3.500 5" stroke="#22c8a8" strokeWidth="1.200" />
        </svg>
      );
    default:
      return (
        <svg viewBox="0 0 24 24" className="w-6 h-6" fill="none" strokeWidth="2.500">
          <rect width="24" height="24" rx="4" fill="#fff" />
          <circle cx="7.500" cy="14" r="3.500" stroke="#38a8f0" />
          <circle cx="16.500" cy="14" r="3.500" stroke="#38a8f0" />
          <circle cx="12" cy="8.500" r="3.500" stroke="#38a8f0" />
          <path d="M9 10.500c1.500 1.500 4 1.500 6 0" stroke="#f05a78" />
          <path d="M8 23.200h4" stroke="#e84a4a" strokeWidth="1.600" />
          <path d="M12 23.200h4" stroke="#2b7de0" strokeWidth="1.600" />
        </svg>
      );
  }
};

const taskItems = ['start', 'explorer', 'uc', 'wps', 'record', 'cmd', 'nox', 'cloud'];

const Taskbar = () => (
  <div className="h-10 flex items-center justify-between bg-linear-to-r from-[#233c40] via-[#21383f] to-[#182442] text-white font-['Open_Sans','Noto_Sans_CJK_SC',sans-serif]">
    <div className="h-full flex gap-px">
      {taskItems.map((item, i) => (
        <button
          key={item}
          aria-label={item}
          className={`w-12 h-full flex flex-col items-center ${item === 'uc' ? 'bg-[#4c6265]' : ''} ${i === 1 ? 'ml-0.5' : ''}`}
        >
          <span className="flex-1 flex items-center"><TaskIcon type={item} /></span>
          {i > 1 && <span className={`h-0.5 -mt-0.5 bg-[#76b5e8] ${item === 'uc' ? 'w-12' : 'w-10'}`} />}
        </button>
      ))}
    </div>
    <div className="flex items-center gap-2 h-full">
      <svg viewBox="0 0 16 16" className="w-4 h-4" fill="none" stroke="#fff" strokeWidth="1.400">
        <path d="M2.500 11 8 5.500l5.500 5.500" />
      </svg>
      <SiWechat className="w-4 h-4 text-[#3ddc74]" />
      <Penguin color="#d63ac0" bow />
      <svg viewBox="0 0 16 16" className="w-4 h-4">
        <circle cx="8" cy="8" r="8" fill="#cfc4b4" />
        <path d="M2 4c3-4 9-4 11-1l-1 5-3-3-3 4-1 5-3-2z" fill="#5a2a20" />
        <path d="M6 8l3-2 3 2-1 4-4 1z" fill="#f2cdb0" />
        <path d="M5 13l5-1 1 4H6z" fill="#b03a2a" />
      </svg>
      <Penguin color="#e03a2a" />
      <svg viewBox="0 0 16 16" className="w-4 h-4">
        <rect width="16" height="16" rx="2.500" fill="#ea4e52" />
        <path d="M8 13.500 2 8c-1-3 2-5.500 6-2.500C12 2.500 15 5 14 8z" fill="#fbd5d2" />
        <path d="M4 6l4 3 4-3M5 9l3 2 3-2" fill="none" stroke="#ea4e52" />
      </svg>
      <svg viewBox="0 0 16 16" className="w-4 h-4">
        <rect width="16" height="16" rx="2.500" fill="#1e8fe0" />
        <path d="M3 5h8M5.500 2.500V10c0 2 3 2 4.500 1M11 5v4" fill="none" stroke="#fff" strokeWidth="2" />
        <rect x="8.500" y="8.500" width="7.500" height="7.500" rx="1" fill="#2fc24a" />
        <path d="M10 12l2 2 3-3.500" fill="none" stroke="#fff" strokeWidth="1.300" />
      </svg>
      <svg viewBox="0 0 16 16" className="w-4 h-4" fill="none" stroke="#fff">
        <path d="M5 3.500h10.500v7H4M10 10.500v3M6.500 14h7M.5 1.500h4v4h-4zM2.500 5.500v8h2" />
      </svg>
      <svg viewBox="0 0 16 16" className="w-4 h-4" fill="none" stroke="#fff">
        <path d="M.5 6v4H3l3 3V3L3 6zM8.500 6c.8 1 .8 3 0 4M11 4.200c1.500 2 1.500 5.500 0 7.500M13.300 2.500c2.400 3.200 2.400 8 0 11" />
      </svg>
      <svg viewBox="0 0 16 16" className="w-4 h-4" stroke="#1b2a3c" strokeWidth="2">
        <circle cx="8" cy="8" r="7" fill="#98a2ab" stroke="none" />
        <path d="M5 5l6 6M11 5l-6 6" />
      </svg>
      <span className="w-4 h-4 ml-1.5 rounded-sm bg-[#2f8df0] text-xs leading-4 font-bold text-center">五</span>
      <div className="w-[74px] text-center text-xs leading-[19px]">
        <div>0:12:23</div>
        <div>2022/3/19</div>
      </div>
      <div className="w-px h-full mr-1 -ml-2 bg-[#5a6678]" />
    </div>
  </div>
);

const App = () => (
  <div className="relative h-screen min-h-[700px] flex flex-col overflow-hidden bg-[#f3f5f7] font-['Liberation_Sans','Noto_Sans_CJK_SC',sans-serif]">
    <div className="font-['Open_Sans','Noto_Sans_CJK_SC',sans-serif]">
      <BrowserTabs />
      <AddressBar />
      <BookmarkBar />
    </div>
    <ConsoleHeader />

    <div className="relative flex-1 min-h-0 flex">
      <Sidebar />
      <main className="flex-1 min-w-0">
        <InstanceHeader />
        <div className="max-w-[1360px] mx-auto pt-5 text-xs">
          <div className="h-12 flex items-center bg-[#d5e9f9] pl-[21px] text-[#12409c]">
            <svg viewBox="0 0 16 16" className="w-4 h-4 shrink-0" fill="none" stroke="#0a6cff" strokeWidth="1.600">
              <circle cx="8" cy="8" r="7.200" />
              <path d="M8 7v5M8 4v1.600" />
            </svg>
            <p className="ml-4">
              快照可用于服务器数据备份。每个地域的免费快照配额为已创建实例数(待回收实例和存储型套餐实例除外)乘以2，且最多不超过10个。注：使用存储型套餐的实例不支持创建快照。
            </p>
          </div>
          <div className="mt-5 flex items-center justify-between pr-1.5">
            <button disabled className="h-[30px] px-[21px] bg-[#a9d0fb] text-white font-medium">创建快照</button>
            <button aria-label="刷新列表">
              <svg viewBox="0 0 14 16" className="w-3.5 h-4" fill="none" stroke="#777" strokeWidth="1.600">
                <path d="M4 12.500A5.500 5.500 0 0 1 6 2.600M10 3.500a5.500 5.500 0 0 1-2 9.900" />
                <path d="M6 0v5l3-2.500zM8 11v5l-3-2.500z" fill="#777" stroke="none" />
              </svg>
            </button>
          </div>
          <SnapshotTable />
        </div>
      </main>
      <FloatingTools />
      <div className="absolute right-0 bottom-2.5 w-2 h-[46px] rounded-full bg-[#555]" />
      <div className="absolute right-0 bottom-[290px] w-2 h-15 bg-white shadow-[0_4px_12px_rgba(0,0,0,0.400)]" />
    </div>

    <div className="font-['Open_Sans','Noto_Sans_CJK_SC',sans-serif]">
      <StatusBar />
    </div>
    <Taskbar />

    {/* collapsed desktop widget peeking from the screen edge */}
    <div className="absolute right-0 top-[59px] w-1 h-18 bg-white shadow-[0_2px_8px_rgba(0,0,0,0.400)]" />

    {/* mouse pointer */}
    <svg viewBox="0 0 13 20" className="absolute left-[863px] top-[443px] w-[13px] h-5" fill="#fff" stroke="#000">
      <path d="M.7 1v15.500l3.600-3.400 2.500 5.700 2.500-1.100-2.500-5.500h5z" />
    </svg>
  </div>
);

export default App;
